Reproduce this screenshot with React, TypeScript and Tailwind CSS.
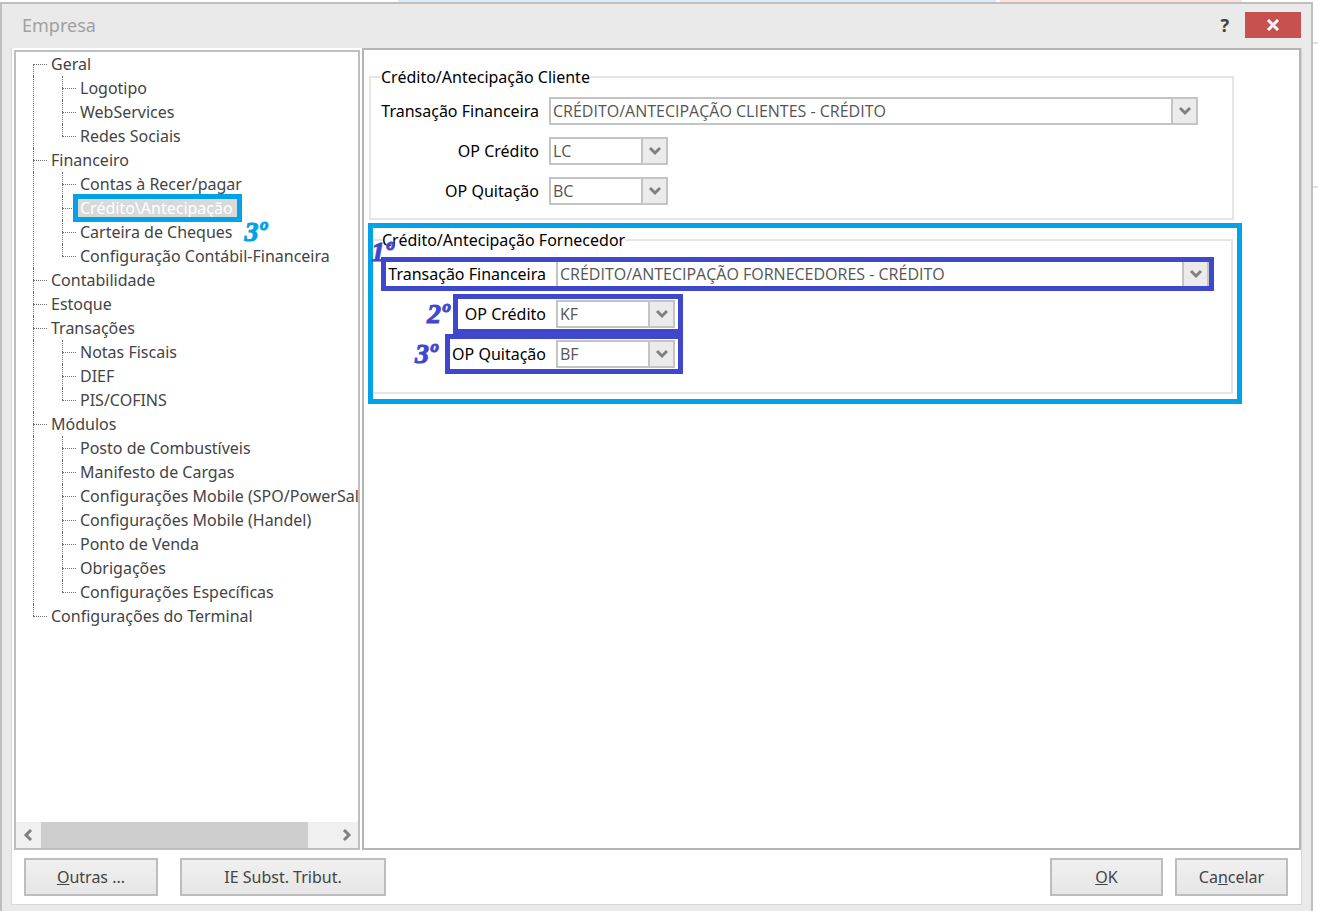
import { useState } from 'react';
import type { ReactNode } from 'react';

type TreeItem = { label: string; mark?: string; children?: TreeItem[] };

const tree: TreeItem[] = [
  {
    label: 'Geral',
    children: [{ label: 'Logotipo' }, { label: 'WebServices' }, { label: 'Redes Sociais' }],
  },
  {
    label: 'Financeiro',
    children: [
      { label: 'Contas à Recer/pagar' },
      { label: 'Crédito\\Antecipação' },
      { label: 'Carteira de Cheques', mark: '3º' },
      { label: 'Configuração Contábil-Financeira' },
    ],
  },
  { label: 'Contabilidade' },
  { label: 'Estoque' },
  {
    label: 'Transações',
    children: [{ label: 'Notas Fiscais' }, { label: 'DIEF' }, { label: 'PIS/COFINS' }],
  },
  {
    label: 'Módulos',
    children: [
      { label: 'Posto de Combustíveis' },
      { label: 'Manifesto de Cargas' },
      { label: 'Configurações Mobile (SPO/PowerSales)' },
      { label: 'Configurações Mobile (Handel)' },
      { label: 'Ponto de Venda' },
      { label: 'Obrigações' },
      { label: 'Configurações Específicas' },
    ],
  },
  { label: 'Configurações do Terminal' },
];

const Chevron = ({ className = '' }: { className?: string }) => (
  <svg viewBox="0 0 12 12" className={`h-3 w-3 ${className}`} fill="none" stroke="#808080" strokeWidth="3">
    <path d="M1 3 L6 8 L11 3" />
  </svg>
);

const Mark = ({ children, className = '' }: { children: ReactNode; className?: string }) => (
  <span
    className={`font-['Liberation_Serif',serif] text-[28px] leading-6 font-bold italic [-webkit-text-stroke:1px] ${className}`}
  >
    {children}
  </span>
);

const Connector = ({ first, last }: { first?: boolean; last: boolean }) => (
  <div className="flex h-6 w-[14px] shrink-0 flex-col">
    <div className={`h-3 ${first ? '' : 'border-l border-dotted border-[#707070]'}`} />
    <div className={`h-3 border-t border-dotted border-[#707070] ${last ? '' : 'border-l'}`} />
  </div>
);

type NodeProps = {
  item: TreeItem;
  first: boolean;
  last: boolean;
  selected: string;
  onSelect: (label: string) => void;
};

const TreeNode = ({ item, first, last, selected, onSelect }: NodeProps) => {
  const active = item.label === selected;

  return (
    <li>
      <div className="flex h-6 items-center whitespace-nowrap">
        <Connector first={first} last={last} />
        <button
          type="button"
          onClick={() => onSelect(item.label)}
          className={`ml-[2px] h-[18px] pl-[2px] leading-[18px] ${
            active
              ? 'relative bg-[#d9d9d9] pr-1 text-white outline-5 outline-[#00a2e8]'
              : 'text-[#444]'
          }`}
        >
          {item.label}
        </button>
        {item.mark && <Mark className="ml-3 text-[#00a2e8]">{item.mark}</Mark>}
      </div>
      {item.children && (
        <ul className={`pl-[28px] ${last ? '' : 'border-l border-dotted border-[#707070]'}`}>
          {item.children.map((child, i) => (
            <TreeNode
              key={child.label}
              item={child}
              first={false}
              last={i === item.children!.length - 1}
              selected={selected}
              onSelect={onSelect}
            />
          ))}
        </ul>
      )}
    </li>
  );
};

type FieldProps = {
  id: string;
  label: string;
  value: string;
  wide?: boolean;
  children?: ReactNode;
};

const Field = ({ id, label, value, wide, children }: FieldProps) => (
  <div className="relative flex h-7 items-center">
    <label htmlFor={id} className="w-[167px] shrink-0 text-right whitespace-nowrap text-black">
      {label}
    </label>
    <div className={`relative ml-[10px] h-7 ${wide ? 'flex-1' : 'w-[119px]'}`}>
      <select
        id={id}
        defaultValue={value}
        className="h-7 w-full appearance-none border-2 border-[#c4c4c4] bg-white pl-[2px] font-['Open_Sans',sans-serif] text-[#555] outline-none"
      >
        <option>{value}</option>
      </select>
      <span className="pointer-events-none absolute inset-y-0 right-0 flex w-[27px] items-center justify-center border-2 border-[#c4c4c4] bg-[#ebebeb]">
        <Chevron />
      </span>
    </div>
    {children}
  </div>
);

const frame = 'pointer-events-none absolute border-5 border-[#3f48cc]';

const DialogButton = ({ className, children }: { className: string; children: ReactNode }) => (
  <button
    type="button"
    className={`h-[38px] border-2 border-[#bdbdbd] bg-linear-to-b from-[#f0f0f0] to-[#e6e6e6] text-[#444] ${className}`}
  >
    {children}
  </button>
);

export default function App() {
  const [selected, setSelected] = useState('Crédito\\Antecipação');

  return (
    <div className="flex min-h-screen bg-white font-['Noto_Sans',sans-serif] text-base">
      <div className="flex min-w-0 flex-1 flex-col">
        <div className="flex h-[2px]">
          <div className="ml-[398px] flex-1 bg-[#dcebfb]" />
          <div className="mr-[71px] ml-1 w-[242px] bg-[#fde0e2]" />
        </div>

        <div className="flex flex-1 flex-col border-x-2 border-t-2 border-[#bfbfbf] bg-[#eaeaea] px-[9px] pb-[6px]">
          <header className="flex h-11 items-center pr-px pb-[2px] pl-[11px]">
            <h1 className="flex-1 text-lg text-[#a0a0a0]">Empresa</h1>
            <button type="button" className="mr-4 text-lg font-bold text-[#404040]">
              ?
            </button>
            <button
              type="button"
              aria-label="Fechar"
              className="flex h-[26px] w-14 items-center justify-center bg-[#c75050]"
            >
              <svg viewBox="0 0 14 12" className="h-3 w-[14px]" stroke="#fff" strokeWidth="3">
                <path d="M2 1 L12 11 M12 1 L2 11" />
              </svg>
            </button>
          </header>

          <div className="flex flex-1 flex-col border-x border-b border-[#d8d8d8] bg-white">
            <div className="flex flex-1">
              <nav className="mt-[2px] ml-[2px] flex w-[346px] flex-col border-2 border-[#bfbfbf]">
                <ul className="flex-1 overflow-hidden pl-[17px]">
                  {tree.map((item, i) => (
                    <TreeNode
                      key={item.label}
                      item={item}
                      first={i === 0}
                      last={i === tree.length - 1}
                      selected={selected}
                      onSelect={setSelected}
                    />
                  ))}
                </ul>
                <div className="flex h-[26px] bg-[#f0f0f0]">
                  <button type="button" aria-label="Rolar para a esquerda" className="w-[25px] pl-[6px]">
                    <Chevron className="rotate-90" />
                  </button>
                  <div className="flex-1">
                    <div className="h-full w-[267px] bg-[#cdcdcd]" />
                  </div>
                  <button type="button" aria-label="Rolar para a direita" className="w-[25px] pl-2">
                    <Chevron className="-rotate-90" />
                  </button>
                </div>
              </nav>

              <main className="ml-[2px] min-w-0 flex-1 border-2 border-[#b5b5b5] pt-[15px] pr-[57px] pl-1">
                <fieldset className="mr-2 ml-px h-[155px] border-2 border-[#e5e5e5] pr-[34px]">
                  <legend className="ml-[10px] text-black">Crédito/Antecipação Cliente</legend>
                  <div className="mt-2 ml-px flex flex-col gap-3">
                    <Field
                      id="cliente-transacao"
                      label="Transação Financeira"
                      value="CRÉDITO/ANTECIPAÇÃO CLIENTES - CRÉDITO"
                      wide
                    />
                    <Field id="cliente-credito" label="OP Crédito" value="LC" />
                    <Field id="cliente-quitacao" label="OP Quitação" value="BC" />
                  </div>
                </fieldset>

                <div className="mt-[3px] h-[181px] border-5 border-[#00a2e8] pr-1">
                  <fieldset className="h-[166px] border-2 border-l-0 border-[#e5e5e5] pr-[22px]">
                    <legend className="ml-[9px] text-black">Crédito/Antecipação Fornecedor</legend>
                    <div className="mt-2 ml-[6px] flex flex-col gap-3">
                      <Field
                        id="fornecedor-transacao"
                        label="Transação Financeira"
                        value="CRÉDITO/ANTECIPAÇÃO FORNECEDORES - CRÉDITO"
                        wide
                      >
                        <span className={`${frame} inset-y-[-3px] right-[-5px] left-[2px]`} />
                        <Mark className="absolute -top-5 -left-2 text-[#3f48cc]">1º</Mark>
                      </Field>
                      <Field id="fornecedor-credito" label="OP Crédito" value="KF">
                        <span className={`${frame} -inset-y-[6px] left-[74px] w-[230px]`} />
                        <Mark className="absolute left-12 text-[#3f48cc]">2º</Mark>
                      </Field>
                      <Field id="fornecedor-quitacao" label="OP Quitação" value="BF">
                        <span className={`${frame} -inset-y-[6px] left-[66px] w-[238px]`} />
                        <Mark className="absolute left-9 text-[#3f48cc]">3º</Mark>
                      </Field>
                    </div>
                  </fieldset>
                </div>
              </main>
            </div>

            <footer className="flex gap-[22px] px-3 pt-2 pb-2">
              <DialogButton className="w-[134px]">
                <u>O</u>utras ...
              </DialogButton>
              <DialogButton className="w-[206px]">IE Subst. Tribut.</DialogButton>
              <div className="mr-px ml-auto flex gap-3">
                <DialogButton className="w-[113px]">
                  <u>O</u>K
                </DialogButton>
                <DialogButton className="w-[113px]">
                  Ca<u>n</u>celar
                </DialogButton>
              </div>
            </footer>
          </div>
        </div>
      </div>

      <div className="w-[5px]">
        <div className="h-11 border-b-2 border-[#e0e0e0]" />
        <div className="h-36 border-b-2 border-[#e0e0e0]" />
      </div>
    </div>
  );
}
